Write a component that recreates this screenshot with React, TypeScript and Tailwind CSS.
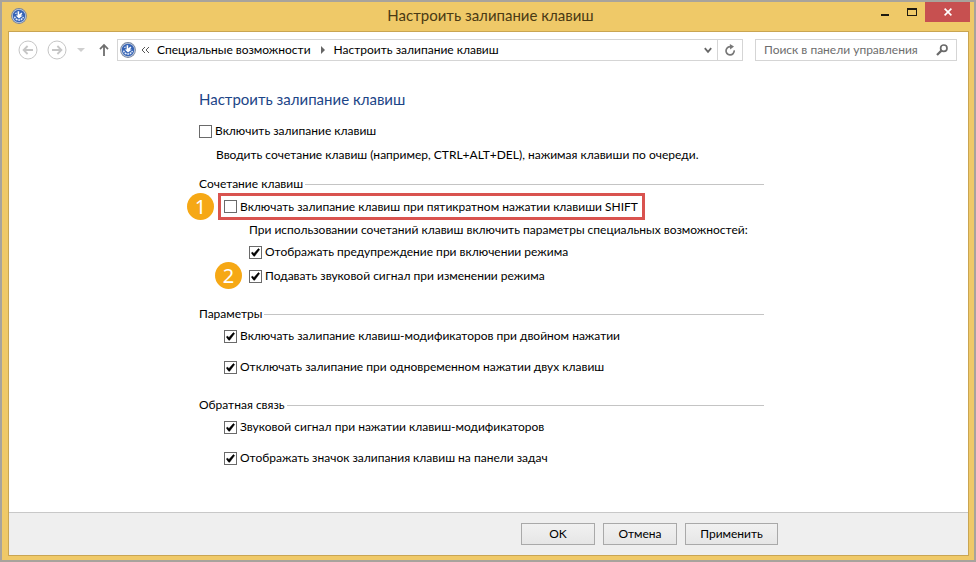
import { useState } from "react";
import type { ReactNode } from "react";

type CheckProps = {
  id: string;
  label: string;
  defaultChecked?: boolean;
};

function Check({ id, label, defaultChecked = false }: CheckProps) {
  return (
    <div className="flex items-center gap-[3px]">
      <span className="grid shrink-0">
        <input
          id={id}
          type="checkbox"
          defaultChecked={defaultChecked}
          className="peer col-start-1 row-start-1 size-[13px] appearance-none border border-[#6a6a6a] bg-white"
        />
        <svg
          viewBox="0 0 13 13"
          className="pointer-events-none invisible col-start-1 row-start-1 size-[13px] peer-checked:visible"
          aria-hidden="true"
        >
          <path d="M3 6 5 7.4 9.4 2.6 10.6 3.6 5.6 10.2 4.8 10.2 2.6 7.4Z" fill="#000" stroke="#000" strokeWidth="0.5" />
        </svg>
      </span>
      <label htmlFor={id} className="whitespace-nowrap">
        {label}
      </label>
    </div>
  );
}

function Group({ title, children }: { title: string; children: ReactNode }) {
  return (
    <section>
      <div className="flex h-[18px] items-center gap-[2px]">
        <h2 className="whitespace-nowrap">{title}</h2>
        <div className="h-px flex-1 bg-[#c4c4c4]" />
      </div>
      {children}
    </section>
  );
}

function Badge({ children }: { children: ReactNode }) {
  return (
    <span className="flex size-[27px] items-center justify-center rounded-full bg-[#f6a815] font-['Noto_Sans',sans-serif] text-xl leading-none text-white">
      {children}
    </span>
  );
}

function AccessIcon() {
  return (
    <svg viewBox="0 0 16 16" className="size-4 shrink-0" aria-hidden="true">
      <circle cx="8" cy="8" r="7.9" fill="#75839d" />
      <circle cx="8" cy="8" r="7" fill="#c3cfe2" />
      <circle cx="8" cy="8" r="6.2" fill="#3563b5" />
      <path d="M3.6 8.6A4.5 4.5 0 0 0 12.3 8.9" fill="none" stroke="#e8effa" strokeWidth="1.5" strokeDasharray="1.9 0.7" />
      <path d="M6.6 3.2H8.2V6.4L10.4 4.6 11.4 5.8 9.6 7.6H11.8L8 10.4 4.8 7.6H6.6Z" fill="#fff" />
      <path d="M3.8 5.4 5.4 4.2 5.6 6.2Z" fill="#e8effa" />
    </svg>
  );
}

function TitleBar() {
  return (
    <header className="flex h-[29px] items-start pl-[9px] pr-1">
      <div className="flex h-7 flex-1 items-center">
        <AccessIcon />
      </div>
      <h1 className="flex h-7 items-center whitespace-nowrap text-[15px] text-[#4a3a14]">Настроить залипание клавиш</h1>
      <div className="flex flex-1 justify-end">
        <button type="button" aria-label="Свернуть" className="flex h-5 w-[27px] items-center justify-center">
          <span className="mt-[5px] h-[2px] w-2 bg-[#1e1a10]" />
        </button>
        <button type="button" aria-label="Развернуть" className="flex h-5 w-[27px] items-center justify-center">
          <span className="h-2 w-[10px] border border-t-2 border-[#1e1a10]" />
        </button>
        <button type="button" aria-label="Закрыть" className="flex h-5 w-[45px] items-center justify-center bg-[#c75050]">
          <svg viewBox="0 0 8 8" className="size-2" aria-hidden="true">
            <path d="M0.6 0.6 7.4 7.4M7.4 0.6 0.6 7.4" stroke="#fff" strokeWidth="1.6" />
          </svg>
        </button>
      </div>
    </header>
  );
}

function NavBar() {
  const [query, setQuery] = useState("");

  return (
    <nav className="flex h-9 items-center pl-[9px] pr-[11px]">
      <button type="button" aria-label="Назад" className="size-5">
        <svg viewBox="0 0 20 20" fill="none" stroke="#c6c6c6" aria-hidden="true">
          <circle cx="10" cy="10" r="9" />
          <path d="M15 10H6M9.6 6 5.6 10 9.6 14" strokeWidth="1.8" />
        </svg>
      </button>
      <button type="button" aria-label="Вперед" className="ml-[9px] size-5">
        <svg viewBox="0 0 20 20" fill="none" stroke="#c6c6c6" aria-hidden="true">
          <circle cx="10" cy="10" r="9" />
          <path d="M5 10H14M10.4 6 14.4 10 10.4 14" strokeWidth="1.8" />
        </svg>
      </button>
      <button type="button" aria-label="Последние страницы" className="ml-[10px] w-2">
        <svg viewBox="0 0 8 4" aria-hidden="true">
          <path d="M0 0H8L4 4Z" fill="#cfcfcf" />
        </svg>
      </button>
      <button type="button" aria-label="Вверх" className="ml-[13px] w-3">
        <svg viewBox="0 0 12 14" fill="none" stroke="#6e6e6e" strokeWidth="1.8" aria-hidden="true">
          <path d="M6 13V2M2 6.2 6 2 10 6.2" />
        </svg>
      </button>
      <div className="ml-[7px] flex h-[22px] flex-1 items-center border border-[#d5d5d5]">
        <span className="ml-[2px] flex">
          <AccessIcon />
        </span>
        <svg viewBox="0 0 9 8" className="ml-[5px] h-2 w-[9px]" fill="none" stroke="#555" aria-hidden="true">
          <path d="M4 1 1 4 4 7M8 1 5 4 8 7" />
        </svg>
        <a href="#accessibility" className="ml-[7px] whitespace-nowrap">
          Специальные возможности
        </a>
        <svg viewBox="0 0 4 8" className="ml-[10px] h-2 w-1" aria-hidden="true">
          <path d="M0 0 4 4 0 8Z" fill="#666" />
        </svg>
        <a href="#sticky-keys" className="ml-[9px] whitespace-nowrap">
          Настроить залипание клавиш
        </a>
        <button type="button" aria-label="Предыдущие расположения" className="ml-auto flex h-full w-[19px] items-center justify-center">
          <svg viewBox="0 0 8 7" className="h-[7px] w-2" fill="none" stroke="#666" strokeWidth="1.8" aria-hidden="true">
            <path d="M0.8 1.2 4 4.8 7.2 1.2" />
          </svg>
        </button>
        <button type="button" aria-label="Обновить" className="flex h-full w-[25px] items-center justify-center border-l border-[#d5d5d5]">
          <svg viewBox="0 0 12 12" className="size-3" fill="none" stroke="#777" strokeWidth="1.7" aria-hidden="true">
            <path d="M7.4 2.9A4.1 4.1 0 1 0 10.2 6.4" />
            <path d="M5.8 0 10 2.6 6.2 5.6Z" fill="#777" stroke="none" />
          </svg>
        </button>
      </div>
      <div className="ml-3 flex h-[22px] w-[202px] items-center border border-[#d5d5d5] px-2">
        <input
          type="text"
          aria-label="Поиск в панели управления"
          placeholder="Поиск в панели управления"
          value={query}
          onChange={(e) => setQuery(e.target.value)}
          className="min-w-0 flex-1 outline-none placeholder:text-[#6d6d6d]"
        />
        <svg viewBox="0 0 12 12" className="size-3 shrink-0" fill="none" stroke="#6a6a6a" aria-hidden="true">
          <circle cx="7.8" cy="4.2" r="3.2" strokeWidth="1.7" />
          <path d="M5.4 6.6 1 11" strokeWidth="2.2" />
        </svg>
      </div>
    </nav>
  );
}

const BUTTON = "h-[22px] border border-[#a9a9a9] bg-gradient-to-b from-[#f1f1f1] to-[#e6e6e6]";

export default function App() {
  return (
    <div className="flex min-h-screen flex-col border-2 border-[#a8a39c] bg-[#efc968] font-[Lato,'Noto_Sans',sans-serif] text-xs text-black">
      <TitleBar />
      <div className="mb-1 ml-[6px] mr-[5px] flex flex-1 flex-col border border-[#c9a552] bg-white">
        <NavBar />
        <main className="flex-1 pl-[190px] pr-[204px] pb-10 pt-[18px]">
          <h2 className="flex h-7 items-center text-[15px] text-[#1c4587]">Настроить залипание клавиш</h2>
          <div className="mt-[7px] flex h-5 items-center">
            <Check id="sticky" label="Включить залипание клавиш" />
          </div>
          <p className="mb-[10px] ml-[17px] mt-1 h-5 whitespace-nowrap leading-5">
            Вводить сочетание клавиш (например, CTRL+ALT+DEL), нажимая клавиши по очереди.
          </p>

          <Group title="Сочетание клавиш">
            <div className="relative ml-[19px] flex h-[27px] w-fit items-center border-3 border-[#d9534f] pl-[3px] pr-1">
              <span className="absolute -left-[34px] -top-[3px]">
                <Badge>1</Badge>
              </span>
              <Check id="shift" label="Включать залипание клавиш при пятикратном нажатии клавиши SHIFT" />
            </div>
            <div className="ml-[50px]">
              <p className="h-5 whitespace-nowrap leading-5">
                При использовании сочетаний клавиш включить параметры специальных возможностей:
              </p>
              <div className="mt-[2px] flex h-5 items-center">
                <Check id="warning" label="Отображать предупреждение при включении режима" defaultChecked />
              </div>
              <div className="relative mt-1 flex h-5 items-center">
                <span className="absolute -left-[34px] -top-1">
                  <Badge>2</Badge>
                </span>
                <Check id="sound" label="Подавать звуковой сигнал при изменении режима" defaultChecked />
              </div>
            </div>
          </Group>

          <div className="mt-[19px]">
            <Group title="Параметры">
              <div className="ml-[25px] mt-[3px] flex h-5 items-center">
                <Check id="double" label="Включать залипание клавиш-модификаторов при двойном нажатии" defaultChecked />
              </div>
              <div className="ml-[25px] mt-[11px] flex h-5 items-center">
                <Check id="two-keys" label="Отключать залипание при одновременном нажатии двух клавиш" defaultChecked />
              </div>
            </Group>
          </div>

          <div className="mt-[19px]">
            <Group title="Обратная связь">
              <div className="ml-[25px] mt-[3px] flex h-5 items-center">
                <Check id="modifier-sound" label="Звуковой сигнал при нажатии клавиш-модификаторов" defaultChecked />
              </div>
              <div className="ml-[25px] mt-[11px] flex h-5 items-center">
                <Check id="taskbar" label="Отображать значок залипания клавиш на панели задач" defaultChecked />
              </div>
            </Group>
          </div>
        </main>
        <footer className="flex h-[43px] justify-end gap-2 border-t border-[#c8c8c8] bg-[#efefef] pr-[190px] pt-[10px]">
          <button type="button" className={`${BUTTON} w-[74px]`}>
            OK
          </button>
          <button type="button" className={`${BUTTON} w-[74px]`}>
            Отмена
          </button>
          <button type="button" className={`${BUTTON} w-[93px]`}>
            Применить
          </button>
        </footer>
      </div>
    </div>
  );
}
